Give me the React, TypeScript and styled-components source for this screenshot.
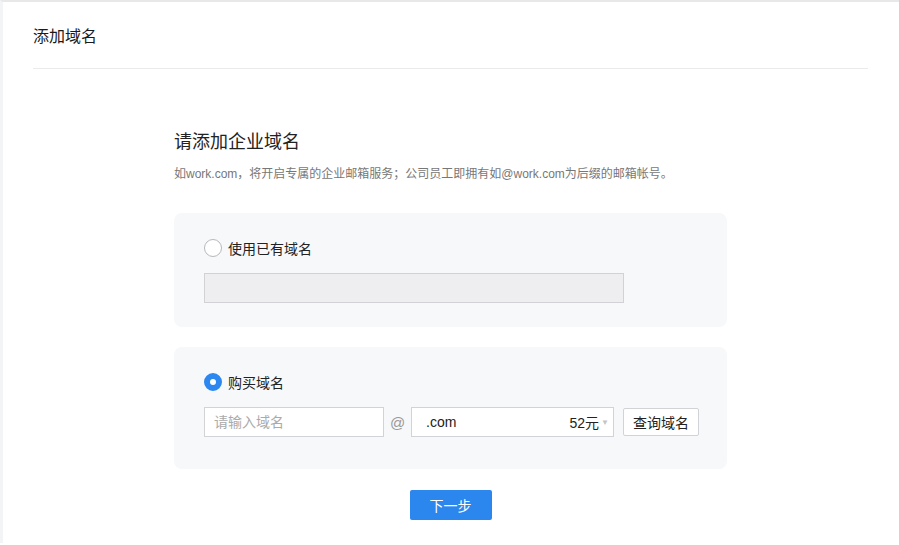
import styled, { createGlobalStyle } from "styled-components";

const GlobalStyle = createGlobalStyle`
  html, body {
    margin: 0;
    padding: 0;
    background: #fff;
    font-family: Arial, "Liberation Sans", "Noto Sans CJK SC", sans-serif;
    color: #222;
  }
`;

export default function App() {
  return (
    <>
      <GlobalStyle />
      <Page>
        <Header>添加域名</Header>
        <Content>
          <Title>请添加企业域名</Title>
          <Hint>如work.com，将开启专属的企业邮箱服务；公司员工即拥有如@work.com为后缀的邮箱帐号。</Hint>

          <Card $pb={24}>
            <RadioRow>
              <Radio $checked={false} />
              <RadioLabel>使用已有域名</RadioLabel>
            </RadioRow>
            <DisabledInput disabled />
          </Card>

          <Card $pb={32}>
            <RadioRow>
              <Radio $checked />
              <RadioLabel>购买域名</RadioLabel>
            </RadioRow>
            <BuyRow>
              <TextInput placeholder="请输入域名" />
              <At>@</At>
              <Select>
                <Suffix>.com</Suffix>
                <Price>52元</Price>
                <Caret>▼</Caret>
              </Select>
              <QueryButton>查询域名</QueryButton>
            </BuyRow>
          </Card>

          <Footer>
            <PrimaryButton>下一步</PrimaryButton>
          </Footer>
        </Content>
      </Page>
    </>
  );
}

// ---------------------------------------------------------------------------
// Styles
// ---------------------------------------------------------------------------

const Page = styled.div`
  border-top: 2px solid #e8e8e8;
  border-left: 3px solid #f3f4f6;
  min-height: 543px;
  box-sizing: border-box;
  padding: 0 31px 0 30px;
`;

const Header = styled.div`
  height: 67px;
  line-height: 70px;
  font-size: 16px;
  color: #1a1a1a;
  border-bottom: 1px solid #ebebeb;
  box-sizing: border-box;
`;

const Content = styled.div`
  width: 553px;
  margin: 0 auto;
  padding-top: 58px;
`;

const Title = styled.h2`
  margin: 0;
  font-size: 18px;
  font-weight: 400;
  color: #222;
  line-height: 30px;
`;

const Hint = styled.p`
  margin: 9px 0 0;
  font-size: 12px;
  color: #777;
  line-height: 16px;
`;

const Card = styled.div<{ $pb: number }>`
  margin-top: 20px;
  &:first-of-type {
    margin-top: 31px;
  }
  background: #f7f8fa;
  border-radius: 8px;
  padding: 26px 30px ${(p) => p.$pb}px;
  display: flex;
  flex-direction: column;
  gap: 16px;
`;

const RadioRow = styled.div`
  display: flex;
  align-items: center;
  gap: 6px;
  height: 18px;
`;

const Radio = styled.span<{ $checked: boolean }>`
  width: 18px;
  height: 18px;
  border-radius: 50%;
  box-sizing: border-box;
  background: #fff;
  border: ${(p) => (p.$checked ? "6px solid #2d87f0" : "1px solid #b8b8bc")};
`;

const RadioLabel = styled.span`
  font-size: 14px;
  color: #222;
`;

const DisabledInput = styled.input`
  width: 420px;
  height: 30px;
  box-sizing: border-box;
  background: #eeeef0;
  border: 1px solid #d2d2d6;
  margin: 0;
`;

const BuyRow = styled.div`
  display: flex;
  align-items: center;
  & > * {
    flex-shrink: 0;
  }
`;

const TextInput = styled.input`
  width: 180px;
  height: 30px;
  box-sizing: border-box;
  border: 1px solid #d2d3d8;
  padding: 0 9px;
  font-size: 14px;
  font-family: inherit;
  outline: none;
  &::placeholder {
    color: #aaa;
  }
`;

const At = styled.span`
  width: 27px;
  text-align: center;
  font-size: 15px;
  color: #999;
`;

const Select = styled.div`
  width: 203px;
  height: 30px;
  box-sizing: border-box;
  background: #fff;
  border: 1px solid #d2d3d8;
  display: flex;
  align-items: center;
  padding: 0 4px 0 14px;
  font-size: 14px;
`;

const Suffix = styled.span`
  flex: 1;
  color: #222;
`;

const Price = styled.span`
  color: #222;
`;

const Caret = styled.span`
  font-size: 8px;
  color: #c4c4c4;
  margin-left: 2px;
`;

const QueryButton = styled.button`
  margin-left: 9px;
  width: 76px;
  height: 28px;
  background: #fff;
  border: 1px solid #d2d3d8;
  border-radius: 2px;
  font-size: 14px;
  font-family: inherit;
  color: #222;
  padding: 0;
`;

const Footer = styled.div`
  display: flex;
  justify-content: center;
  margin-top: 21px;
`;

const PrimaryButton = styled.button`
  width: 82px;
  height: 30px;
  background: #2b86ee;
  border: none;
  border-radius: 2px;
  color: #fff;
  font-size: 14px;
  font-family: inherit;
  padding: 0;
`;
